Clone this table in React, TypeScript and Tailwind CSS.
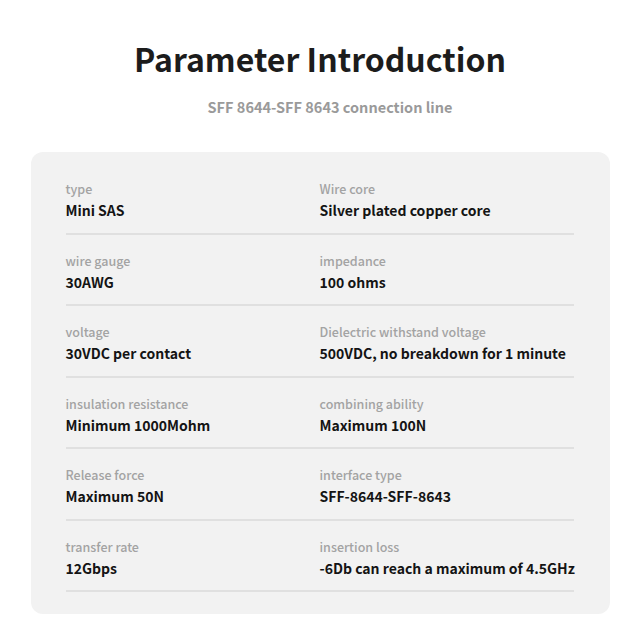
const rows: [string, string, string, string][] = [
  ["type", "Mini SAS", "Wire core", "Silver plated copper core"],
  ["wire gauge", "30AWG", "impedance", "100 ohms"],
  ["voltage", "30VDC per contact", "Dielectric withstand voltage", "500VDC, no breakdown for 1 minute"],
  ["insulation resistance", "Minimum 1000Mohm", "combining ability", "Maximum 100N"],
  ["Release force", "Maximum 50N", "interface type", "SFF-8644-SFF-8643"],
  ["transfer rate", "12Gbps", "insertion loss", "-6Db can reach a maximum of 4.5GHz"],
];

function Cell({ label, value }: { label: string; value: string }) {
  return (
    <div>
      <div className="text-[12.5px] leading-[19px] text-[#a3a3a3] font-medium whitespace-nowrap">{label}</div>
      <div className="mt-[1px] text-[14px] leading-[22px] text-[#141414] font-bold whitespace-nowrap">{value}</div>
    </div>
  );
}

export default function App() {
  return (
    <main
      className="w-[640px] h-[640px] bg-white flex flex-col items-center"
      style={{ fontFamily: '"Noto Sans CJK SC", "Noto Sans", sans-serif' }}
    >
      <h1 className="mt-[35px] text-[32px] leading-[46px] font-bold text-[#1c1c1c]">
        Parameter Introduction
      </h1>
      <p className="mt-[15px] ml-[20px] text-[14.5px] leading-[22px] font-bold text-[#9a9a9a]">
        SFF 8644-SFF 8643 connection line
      </p>

      <section className="mt-[34px] w-[579px] bg-[#f2f2f2] rounded-[12px] pl-[35px] pr-[36px] pt-[11px] pb-[22px]">
        {rows.map(([l1, v1, l2, v2]) => (
          <div key={l1} className="grid grid-cols-2 pt-[16px] pb-[11.5px] border-b-[2px] border-[#e0e0e0]">
            <Cell label={l1} value={v1} />
            <Cell label={l2} value={v2} />
          </div>
        ))}
      </section>
    </main>
  );
}
